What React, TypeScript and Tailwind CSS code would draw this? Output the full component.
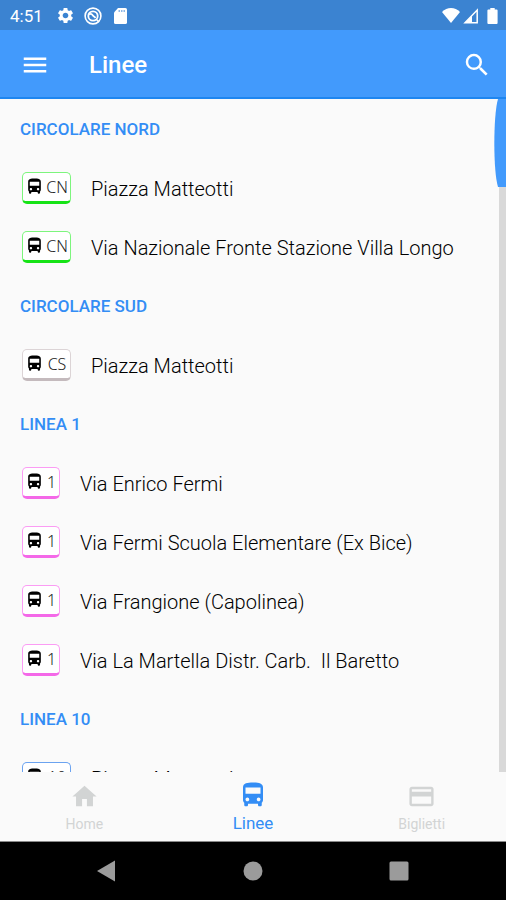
import React from 'react';
import { MdCreditCard, MdDirectionsBus, MdHome, MdMenu, MdSearch, MdSettings } from 'react-icons/md';

const sections = [
  {
    title: 'CIRCOLARE NORD',
    code: 'CN',
    badge: 'border-[#7df57d] border-b-[#16e316]',
    stops: ['Piazza Matteotti', 'Via Nazionale Fronte Stazione Villa Longo'],
  },
  {
    title: 'CIRCOLARE SUD',
    code: 'CS',
    badge: 'border-[#dcd4d6] border-b-[#c4babd]',
    stops: ['Piazza Matteotti'],
  },
  {
    title: 'LINEA 1',
    code: '1',
    badge: 'border-[#fb9cf4] border-b-[#f468e8]',
    stops: [
      'Via Enrico Fermi',
      'Via Fermi Scuola Elementare (Ex Bice)',
      'Via Frangione (Capolinea)',
      'Via La Martella Distr. Carb.  Il Baretto',
    ],
  },
  {
    title: 'LINEA 10',
    code: '10',
    badge: 'border-[#6ba3f0] border-b-[#3d85e8]',
    stops: ['Piazza Matteotti'],
  },
];

const tabs = [
  { label: 'Home', icon: MdHome, active: false },
  { label: 'Linee', icon: MdDirectionsBus, active: true },
  { label: 'Biglietti', icon: MdCreditCard, active: false },
];

function StatusBar() {
  return (
    <div className="flex h-[30px] shrink-0 items-center justify-between bg-[#3b83d1] pt-px pr-2 pl-[10px] text-white">
      <div className="flex items-center gap-[9px]">
        <span className="mr-1 text-[17px] leading-5">4:51</span>
        <MdSettings size={19} />
        <svg width="18" height="18" viewBox="0 0 18 18" fill="none" stroke="currentColor">
          <circle cx="9" cy="9" r="7.900" strokeWidth="1.600" />
          <circle cx="9" cy="9" r="4.700" strokeWidth="1.800" />
          <path d="M5 7.500c2-1.200 3.200-.3 3.800.9s1.700 1 2.700 2.600" strokeWidth="1.800" />
          <path d="M12.500 12.500l2.500 2.500" strokeWidth="1.600" />
        </svg>
        <svg width="18" height="18" viewBox="0 0 18 18" fill="currentColor">
          <path d="M7 1h7.400A1.600 1.600 0 0 1 16 2.600v12.800a1.600 1.600 0 0 1-1.600 1.600H4.600A1.600 1.600 0 0 1 3 15.400V5.500z" />
          <path d="M7.500 3h1.500v2H7.500zM10 3h1.500v2H10zM12.500 3H14v2h-1.500z" fill="#8fb8e6" />
        </svg>
      </div>
      <div className="flex items-center">
        <svg width="18" height="18" viewBox="0 0 18 18" fill="currentColor">
          <path d="M0 5C5-.2 13-.2 18 5L9 16z" />
        </svg>
        <svg className="ml-[3px]" width="16" height="18" viewBox="0 0 16 18" fill="none" stroke="currentColor">
          <path d="M2 15.800L14.200 3v12.800z" strokeWidth="1.500" />
          <path d="M2 15.800L9 8.500v7.300z" fill="currentColor" stroke="none" />
        </svg>
        <svg className="ml-[8px]" width="11" height="18" viewBox="0 0 11 18" fill="currentColor">
          <path d="M3.300 1h4.400v1.600h1.900a1 1 0 0 1 1 1V16a1 1 0 0 1-1 1H1.400a1 1 0 0 1-1-1V3.600a1 1 0 0 1 1-1h1.900z" />
        </svg>
      </div>
    </div>
  );
}

function StopRow({ code, badge, name }: { code: string; badge: string; name: string }) {
  const codeWidth = code.length > 1 ? 'min-w-[22px]' : 'min-w-[11px]';
  return (
    <li className="flex h-[59px] items-center gap-5 pl-[22px]">
      <span className={`mb-[2px] flex h-8 shrink-0 items-center gap-[2px] rounded-[5px] border border-b-[3px] bg-white px-[2px] ${badge}`}>
        <MdDirectionsBus size={19} className="text-black" />
        <span className={`text-center font-['Noto_Sans'] text-base font-light text-[#222] ${codeWidth}`}>{code}</span>
      </span>
      <span className="text-xl font-light whitespace-pre text-black">{name}</span>
    </li>
  );
}

export default function App() {
  return (
    <div className="flex h-screen w-full flex-col overflow-hidden bg-[#fafafa] font-[Roboto,sans-serif]">
      <StatusBar />

      <header className="flex h-[69px] shrink-0 items-center border-b-2 border-[#1e86f0] bg-[#429afc] pt-[2px] pr-[14px] pl-5 text-white">
        <button type="button" aria-label="Menu">
          <MdMenu size={30} />
        </button>
        <h1 className="ml-[39px] flex-1 text-2xl font-medium">Linee</h1>
        <button type="button" aria-label="Cerca">
          <MdSearch size={30} />
        </button>
      </header>

      <main className="relative min-h-0 flex-1 overflow-hidden pt-px">
        {sections.map(({ title, code, badge, stops }) => (
          <section key={title}>
            <h2 className="flex h-[59px] items-center pl-5 text-[17px] font-medium text-[#338df5]">{title}</h2>
            <ul>
              {stops.map((name) => (
                <StopRow key={name} code={code} badge={badge} name={name} />
              ))}
            </ul>
          </section>
        ))}
        <div className="absolute inset-y-0 right-0 w-[7px] bg-[#d9d9d9]" />
        <svg className="absolute top-0 right-0" width="12" height="88" viewBox="0 0 12 88" fill="#429afc">
          <path d="M4 0C-.8 16-1 72 4 88h8V0z" />
        </svg>
      </main>

      <nav className="grid h-[70px] shrink-0 grid-cols-3 border-b border-[#8a8a8a] bg-[#fafafa]">
        {tabs.map(({ label, icon: Icon, active }) =>
          active ? (
            <button key={label} type="button" className="flex flex-col items-center gap-px pt-2 text-[17px] leading-6 text-[#338df5]">
              <Icon size={30} />
              {label}
            </button>
          ) : (
            <button key={label} type="button" className="flex flex-col items-center gap-px pt-[10px] text-sm leading-6 text-[#d2d4d4]">
              <Icon size={29} />
              {label}
            </button>
          )
        )}
      </nav>

      <div className="flex h-[58px] shrink-0 items-center justify-around bg-black px-[34px] text-[#9b9b9b]">
        <button type="button" aria-label="Indietro">
          <svg width="20" height="22" viewBox="0 0 20 22" fill="currentColor">
            <path d="M18 .5v21L0 11z" />
          </svg>
        </button>
        <button type="button" aria-label="Schermata iniziale">
          <svg width="20" height="20" viewBox="0 0 20 20" fill="currentColor">
            <circle cx="10" cy="10" r="9.500" />
          </svg>
        </button>
        <button type="button" aria-label="App recenti">
          <svg width="20" height="20" viewBox="0 0 20 20" fill="currentColor">
            <rect x=".5" y=".5" width="19" height="19" rx="1.500" />
          </svg>
        </button>
      </div>
    </div>
  );
}
